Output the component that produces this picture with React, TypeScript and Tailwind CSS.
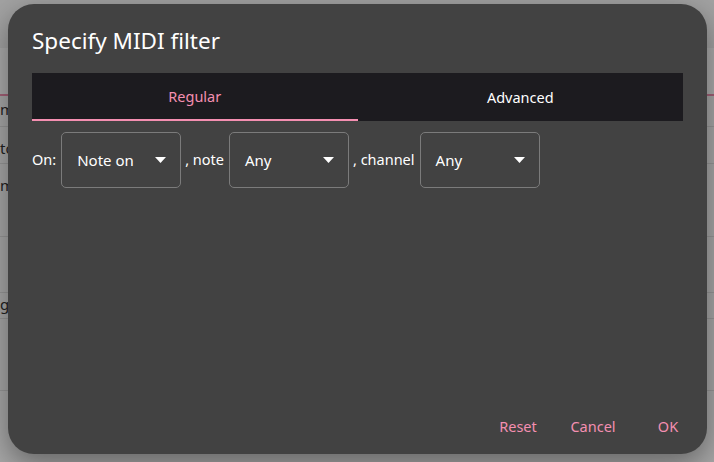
import React from "react";

const font = { fontFamily: '"Noto Sans", "Open Sans", sans-serif' };

const Caret = () => (
  <svg width="11" height="6" viewBox="0 0 11 6" className="shrink-0">
    <path d="M0 0 L11 0 L5.5 6 Z" fill="#ffffff" />
  </svg>
);

const Select = ({ value }: { value: string }) => (
  <div className="flex h-[56px] w-[120px] items-center justify-between rounded-[5px] border border-[#7b7b7b] pl-[15px] pr-[14px]">
    <span className="text-[15px] text-white">{value}</span>
    <Caret />
  </div>
);

// faded page behind the dialog
const BackPage = () => (
  <div className="h-[462px] w-[714px] bg-[#fafafa]">
    <div className="h-[48px] bg-[#f2f2f2]" />
    <div className="h-[48px] border-b-2 border-[#f48fb1] bg-[#ffffff]" />
    <div className="h-[31px] border-b border-[#e0e0e0] pt-[2px] text-[15px] text-[#333]">mmmmm</div>
    <div className="h-[37px] border-b border-[#e0e0e0] pt-[10px] text-[15px] text-[#333]">to</div>
    <div className="h-[73px] border-b border-[#e0e0e0] pt-[10px] text-[15px] text-[#333]">m</div>
    <div className="h-[56px] border-b border-[#e0e0e0]" />
    <div className="h-[26px] border-b border-[#e0e0e0] text-[15px] text-[#333]">g</div>
    <div className="h-[72px] border-b border-[#e0e0e0]" />
  </div>
);

export default function App() {
  return (
    <div className="relative h-[462px] w-[714px] overflow-hidden" style={font}>
      <BackPage />
      <div className="absolute inset-0 bg-black/[0.33] pl-[8px] pt-[4px]">
        <div className="flex h-[450px] w-[699px] flex-col rounded-[26px] bg-[#424242] px-[24px] shadow-[0_10px_30px_rgba(0,0,0,0.4)]">
          <h2 className="mt-[21px] text-[22.5px] leading-[32px] text-white">Specify MIDI filter</h2>

          <div className="mt-[16px] flex h-[48px] bg-[#1c1b1f]">
            <div className="flex flex-1 items-center justify-center border-b-2 border-[#f48fb1] pt-[2px] text-[14.5px] text-[#f48fb1]">
              Regular
            </div>
            <div className="flex flex-1 items-center justify-center pt-[2px] text-[14.5px] text-white">
              Advanced
            </div>
          </div>

          <div className="mt-[11px] flex items-center text-[14.5px] text-white">
            <span className="mr-[5px]">On:</span>
            <Select value="Note on" />
            <span className="ml-[4px] mr-[5px]">, note</span>
            <Select value="Any" />
            <span className="ml-[4px] mr-[5px]">, channel</span>
            <Select value="Any" />
          </div>

          <div className="mt-auto mb-[9px] mr-[-17px] flex justify-end gap-[11px] text-[14.5px] text-[#f48fb1]">
            <button className="h-[36px] min-w-[64px] px-2">Reset</button>
            <button className="h-[36px] min-w-[64px] px-2">Cancel</button>
            <button className="h-[36px] min-w-[64px] px-2">OK</button>
          </div>
        </div>
      </div>
    </div>
  );
}
